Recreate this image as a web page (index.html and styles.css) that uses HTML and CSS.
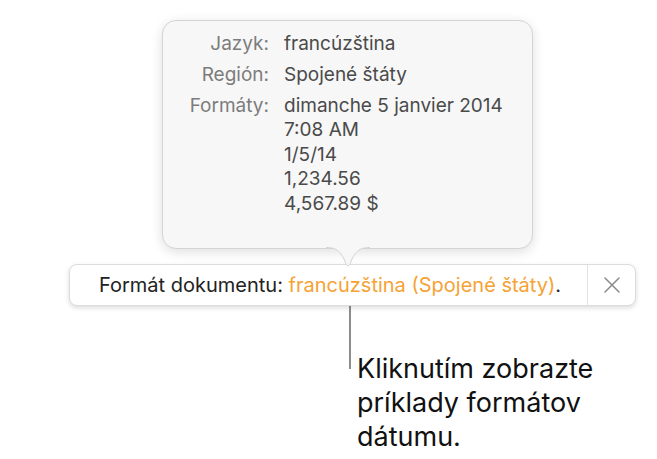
FILE: index.html
```html
<!DOCTYPE html>
<html lang="sk">
<head>
<meta charset="utf-8">
<link rel="stylesheet" href="styles.css">
</head>
<body>
<div class="stage">
  <div class="popover">
    <div class="grid">
      <div class="label">Jazyk:</div>
      <div class="value">francúzština</div>
      <div class="label">Región:</div>
      <div class="value">Spojené štáty</div>
      <div class="label">Formáty:</div>
      <div class="value">dimanche 5 janvier 2014<br>7:08 AM<br>1/5/14<br>1,234.56<br>4,567.89 $</div>
    </div>
    <svg class="arrow" width="44" height="22" viewBox="0 0 44 22">
      <path d="M0 0.5 C 10 0.5, 14 4, 18 12 L 20 17 Q 22 20.5 24 17 L 26 12 C 30 4, 34 0.5, 44 0.5 Z" fill="#f7f7f7"/>
      <path d="M0 0.5 C 10 0.5, 14 4, 18 12 L 20 17 Q 22 20.5 24 17 L 26 12 C 30 4, 34 0.5, 44 0.5" fill="none" stroke="#d4d4d4" stroke-width="1"/>
    </svg>
  </div>
  <div class="bar">
    <div class="msg">Formát dokumentu: <span class="accent">francúzština (Spojené štáty)</span>.</div>
    <div class="close">
      <svg width="18" height="18" viewBox="0 0 18 18"><path d="M2 2 L16 16 M16 2 L2 16" stroke="#8a8a8a" stroke-width="1.5" stroke-linecap="round"/></svg>
    </div>
  </div>
  <div class="callout">
    <div class="line"></div>
    <div class="note">Kliknutím zobrazte<br>príklady formátov<br>dátumu.</div>
  </div>
</div>
</body>
</html>
```
FILE: styles.css
```css
html, body {
  margin: 0;
  padding: 0;
  background: #ffffff;
}
.stage {
  width: 657px;
  height: 459px;
  overflow: hidden;
  font-family: "Inter", "Roboto", "Liberation Sans", sans-serif;
  display: flex;
  flex-direction: column;
}
.popover {
  position: relative;
  z-index: 2;
  box-sizing: border-box;
  margin: 20px 0 0 162px;
  width: 371px;
  height: 229px;
  background: #f7f7f7;
  border: 1px solid #d4d4d4;
  border-radius: 14px;
  box-shadow: 0 3px 12px rgba(0,0,0,0.13);
}
.grid {
  display: grid;
  grid-template-columns: 106px auto;
  column-gap: 15px;
  row-gap: 6.5px;
  padding-top: 10.5px;
  font-size: 19px;
  line-height: 24.5px;
}
.label {
  text-align: right;
  color: #7c7c7c;
}
.value {
  color: #4a4a4a;
}
.arrow {
  position: absolute;
  left: 163px;
  top: 100%;
  margin-top: -1.5px;
  display: block;
}
.bar {
  position: relative;
  z-index: 1;
  box-sizing: border-box;
  margin: 15px 0 0 69px;
  width: 567px;
  height: 42px;
  background: #ffffff;
  border: 1px solid #dcdcdc;
  border-radius: 8px;
  box-shadow: 0 2px 5px rgba(0,0,0,0.14);
  display: flex;
  align-items: center;
}
.msg {
  flex: 1;
  padding-left: 29px;
  font-size: 20px;
  color: #222222;
}
.accent {
  color: #f6a234;
}
.close {
  width: 47px;
  height: 100%;
  border-left: 1px solid #e2e2e2;
  display: flex;
  align-items: center;
  justify-content: center;
}
.close svg {
  display: block;
}
.callout {
  display: flex;
  margin-left: 349px;
}
.line {
  width: 2px;
  height: 63px;
  background: #8d8d8d;
}
.note {
  margin: 45.5px 0 0 6px;
  font-size: 27px;
  line-height: 34px;
  color: #111111;
}
```
